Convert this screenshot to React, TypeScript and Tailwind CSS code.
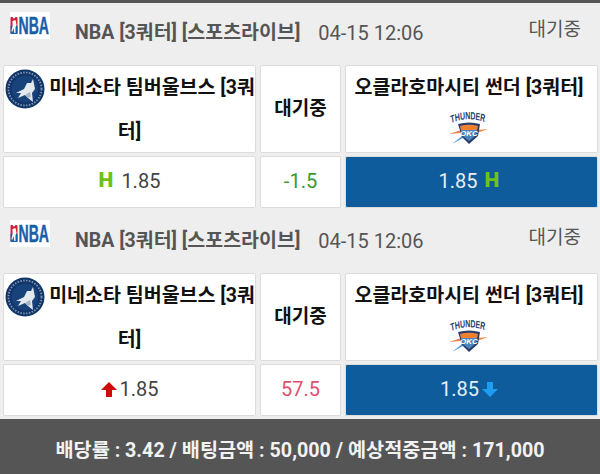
const NbaLogo = () => (
  <div className="flex h-[27px] w-[40px] items-center bg-white">
    <svg width="40" height="27" viewBox="0 0 40 27">
      <rect x="0.5" y="5" width="7" height="17" rx="1" fill="#d0213c" />
      <path d="M0.5 14 h7 v7 a1 1 0 0 1 -1 1 h-5 a1 1 0 0 1 -1 -1 z" fill="#1d5fa8" />
      <path d="M4 6.5 a1.2 1.2 0 1 1 0.1 0 M2.5 9 l3 -1 l1 5 l-1 2 l0 6 l-1.2 0 l-0.6 -5 l-1.5 4 l-0.8 -1 l1.2 -5 z" fill="#fff" />
      <text transform="translate(8.5 22) scale(0.88 1.45)" fontFamily="Liberation Sans, sans-serif" fontWeight="700" fontSize="16" fill="#1a5ea8" stroke="#1a5ea8" strokeWidth="0.3">NBA</text>
    </svg>
  </div>
)

const WolvesLogo = () => (
  <svg width="40" height="40" viewBox="0 0 40 40" className="float-left mr-[4px] mt-[3px] ml-[1px]">
    <circle cx="20" cy="20" r="19.5" fill="#12356a" />
    <circle cx="20" cy="20" r="13.5" fill="#17427a" />
    <circle cx="20" cy="20" r="16.5" fill="none" stroke="#7f97b0" strokeWidth="1.8" strokeDasharray="1.5 1.4" />
    <path d="M28 10 L30 20 L27 24 L28 33 L23 29 L20 26 L13 29 L16 24 L11 24 L19 20 L22 14 L26 14 Z" fill="#e4e9ed" />
    <path d="M20 26 L25 23 L26 28 L23 29 Z" fill="#aab6c0" />
  </svg>
)

const ThunderLogo = ({ id }: { id: string }) => (
  <svg width="40" height="34" viewBox="0 0 40 34" className="mx-auto mt-[8px] block">
    <g transform="scale(1 1.5)">
      <path id={id} d="M2 8 Q20 3 38 8" fill="none" />
      <text fontFamily="Liberation Sans, sans-serif" fontWeight="700" fontSize="7" fill="#26406e">
        <textPath href={`#${id}`}>THUNDER</textPath>
      </text>
    </g>
    <path d="M0 23 L12 19 L12 22 Z" fill="#f08a3c" />
    <path d="M28 19 L39 18 L28 22 Z" fill="#f08a3c" />
    <path d="M3 33 L13 25 L14 27 Z" fill="#4f9bd8" />
    <path d="M9 13 Q20 10 31 13 L29 25 L20 33 L13 26 Z" fill="#26406e" />
    <path d="M11 15 Q20 12.5 29 15 L28 19 L12 19 Z" fill="#f07f2e" />
    <path d="M12 19 L28 19 L27 24 L20 30 L14 25 Z" fill="#4f86c0" />
    <text x="20" y="25" textAnchor="middle" fontFamily="Liberation Sans, sans-serif" fontStyle="italic" fontWeight="700" fontSize="8" fill="#fff">OKC</text>
  </svg>
)

const H = () => <span className="text-[21px] font-black text-[#6cc11d]">H</span>

const Game = ({ id, homeOdds, line, awayOdds }: { id: string; homeOdds: React.ReactNode; line: React.ReactNode; awayOdds: React.ReactNode }) => (
  <div className="px-[3px] pb-[3px]">
    <div className="flex h-[62px] text-[#555]">
      <div className="ml-[7px] mt-[9px]">
        <NbaLogo />
      </div>
      <div className="ml-[25px] mt-[17px] text-[19.5px] font-bold leading-[26px]">NBA [3쿼터] [스포츠라이브]</div>
      <div className="ml-[18px] mt-[17px] text-[20px] leading-[26px]">04-15 12:06</div>
      <div className="ml-auto mr-[16px] mt-[14px] text-[19px] leading-[26px]">대기중</div>
    </div>
    <div className="grid grid-cols-[253px_81px_253px] gap-x-[4px] gap-y-[3px]">
      <div className="h-[88px] rounded-[2px] border border-[#dcdcdc] bg-white text-center text-[19.5px] font-bold leading-[44px] text-[#111]">
        <WolvesLogo />
        미네소타 팀버울브스 [3쿼터]
      </div>
      <div className="flex h-[88px] items-center justify-center rounded-[2px] border border-[#dcdcdc] bg-white text-[19px] font-bold text-[#111]">
        대기중
      </div>
      <div className="h-[88px] rounded-[2px] border border-[#dcdcdc] bg-white pr-[5px] text-center text-[19.5px] font-bold text-[#111]">
        <div className="mt-[7px] leading-[30px]">오클라호마시티 썬더 [3쿼터]</div>
        <ThunderLogo id={id} />
      </div>
      <div className="flex h-[52px] items-center justify-center rounded-[2px] border border-[#dcdcdc] bg-white pb-[2px] text-[20px] text-[#444]">
        {homeOdds}
      </div>
      <div className="flex h-[52px] items-center justify-center rounded-[2px] border border-[#dcdcdc] bg-white pb-[2px] text-[20px]">
        {line}
      </div>
      <div className="flex h-[52px] items-center justify-center rounded-[2px] border border-[#dcdcdc] bg-[#0f5c9c] pb-[2px] pr-[5px] text-[20px] text-[#e4eef6]">
        {awayOdds}
      </div>
    </div>
  </div>
)

export default function App() {
  return (
    <div className="h-[474px] w-[600px] overflow-hidden bg-[#eeeeee] font-['Roboto','Noto_Sans_CJK_KR',sans-serif]">
      <div className="h-[3px] bg-[#555]" />
      <Game
        id="okc-a"
        homeOdds={<><H /><span className="ml-[8px]">1.85</span></>}
        line={<span className="text-[#3a9a2e]">-1.5</span>}
        awayOdds={<><span className="mr-[7px]">1.85</span><H /></>}
      />
      <Game
        id="okc-b"
        homeOdds={
          <>
            <svg width="16" height="15" viewBox="0 0 16 15" className="mr-[3px]"><path d="M8 0 L16 8 H11 V15 H5 V8 H0 Z" fill="#d10a0a" /></svg>
            1.85
          </>
        }
        line={<span className="text-[#e0506e]">57.5</span>}
        awayOdds={
          <>
            1.85
            <svg width="16" height="15" viewBox="0 0 16 15" className="ml-[3px]"><path d="M5 0 H11 V7 H16 L8 15 L0 7 H5 Z" fill="#1d9cf0" /></svg>
          </>
        }
      />
      <div className="flex h-[55px] items-center justify-center bg-[#555] pt-[8px] text-[19.7px] font-bold text-[#f2f2f2]">
        배당률 : 3.42 / 배팅금액 : 50,000 / 예상적중금액 : 171,000
      </div>
    </div>
  )
}
